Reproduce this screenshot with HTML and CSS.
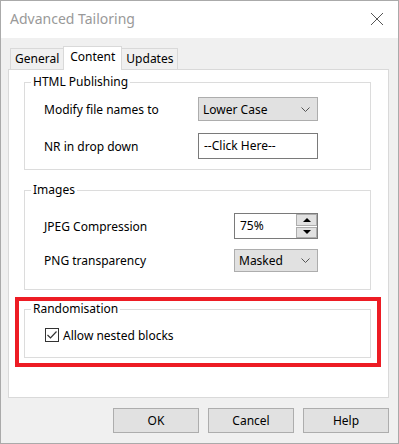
FILE: index.html
```html
<!DOCTYPE html>
<html lang="en">

<head>
    <meta charset="UTF-8">
    <title>Advanced Tailoring</title>
    <link rel="stylesheet" href="styles.css">
</head>

<body>
    <div class="window">
        <div class="titlebar">
            <span class="title">Advanced Tailoring</span>
            <svg class="close" width="14" height="14" viewBox="0 0 14 14">
                <path d="M1 1 L13 13 M13 1 L1 13" stroke="#555" stroke-width="1" fill="none"/>
            </svg>
        </div>
        <div class="client">
            <div class="tabs">
                <div class="tab">General</div>
                <div class="tab active">Content</div>
                <div class="tab">Updates</div>
            </div>
            <div class="panel">
                <!-- HTML 发布 -->
                <fieldset class="group group-html">
                    <legend>HTML Publishing</legend>
                    <div class="row row-first">
                        <label>Modify file names to</label>
                        <div class="combo combo-wide">
                            <span>Lower Case</span>
                            <svg class="chevron" width="9" height="5" viewBox="0 0 9 5"><path d="M0.5 0.5 L4.5 4.5 L8.5 0.5" stroke="#555" fill="none"/></svg>
                        </div>
                    </div>
                    <div class="row row-second">
                        <label>NR in drop down</label>
                        <div class="textbox">--Click Here--</div>
                    </div>
                </fieldset>

                <!-- 图片 -->
                <fieldset class="group group-img">
                    <legend>Images</legend>
                    <div class="row row-first">
                        <label>JPEG Compression</label>
                        <div class="spin">
                            <span class="spin-text">75%</span>
                            <div class="spin-btns">
                                <i class="spin-up"></i>
                                <i class="spin-down"></i>
                            </div>
                        </div>
                    </div>
                    <div class="row row-second">
                        <label>PNG transparency</label>
                        <div class="combo combo-small">
                            <span>Masked</span>
                            <svg class="chevron" width="9" height="5" viewBox="0 0 9 5"><path d="M0.5 0.5 L4.5 4.5 L8.5 0.5" stroke="#555" fill="none"/></svg>
                        </div>
                    </div>
                </fieldset>

                <!-- 红框标注 -->
                <div class="highlight">
                    <fieldset class="group group-rand">
                        <legend>Randomisation</legend>
                        <div class="row row-first">
                            <span class="checkbox">
                                <svg width="12" height="12" viewBox="0 0 12 12"><path d="M1.5 6 L4.5 9 L10.5 2.5" stroke="#333" stroke-width="1.2" fill="none"/></svg>
                            </span>
                            <label>Allow nested blocks</label>
                        </div>
                    </fieldset>
                </div>
            </div>
            <div class="buttons">
                <div class="btn">OK</div>
                <div class="btn">Cancel</div>
                <div class="btn">Help</div>
            </div>
        </div>
    </div>
</body>

</html>
```

FILE: styles.css
```css
* {
    margin: 0;
    padding: 0;
    box-sizing: border-box;
}

body {
    font-family: "Noto Sans", "Liberation Sans", sans-serif;
    font-size: 12px;
    color: #000;
    background: #fff;
}

.window {
    width: 399px;
    height: 444px;
    border: 1px solid #aaa;
    background: #f0f0f0;
    display: flex;
    flex-direction: column;
}

.titlebar {
    height: 37px;
    background: #fff;
    display: flex;
    align-items: center;
    justify-content: space-between;
    padding: 0 14px 2px 9px;
}

.title {
    font-size: 14px;
    color: #999;
}

.client {
    flex: 1;
    padding: 8px 9px 0 7px;
}

.tabs {
    display: flex;
    align-items: flex-end;
    height: 23px;
    padding-left: 2px;
    position: relative;
    z-index: 1;
}

.tab {
    height: 21px;
    border: 1px solid #d9d9d9;
    border-bottom: none;
    padding: 0 4px;
    line-height: 20px;
    margin-right: -1px;
    background: #f0f0f0;
}

.tab.active {
    height: 24px;
    margin-bottom: -1px;
    background: #fff;
    line-height: 20px;
    padding: 0 6px;
}

.panel {
    height: 329px;
    border: 1px solid #d9d9d9;
    background: #fff;
    padding: 4px 17px 0 15px;
}

.group {
    border: 1px solid #dcdcdc;
    padding: 0 0 10px 0;
}

.group legend {
    margin-left: 6px;
    padding: 0 2px;
    line-height: 16px;
}

.row {
    display: flex;
    align-items: center;
    padding-left: 19px;
}

.group-html .row label {
    width: 154px;
}

.group-img .row label {
    width: 190px;
}

.group-html .row-first {
    margin-top: 7px;
}

.group-html .row-second {
    margin-top: 12px;
}

.group-img {
    margin-top: 12px;
    padding-bottom: 17px;
}

.group-img .row-first {
    margin-top: 15px;
}

.group-img .row-second {
    margin-top: 10px;
}

.combo {
    height: 24px;
    background: #e1e1e1;
    border: 1px solid #adadad;
    display: flex;
    align-items: center;
    justify-content: space-between;
    padding: 0 7px 0 4px;
}

.combo-wide {
    width: 120px;
}

.combo-small {
    width: 84px;
    height: 23px;
}

.textbox {
    width: 120px;
    height: 26px;
    border: 1px solid #7a7a7a;
    padding-left: 5px;
    line-height: 24px;
}

.spin {
    width: 84px;
    height: 26px;
    border: 1px solid #7a7a7a;
    display: flex;
    justify-content: space-between;
}

.spin-text {
    padding-left: 5px;
    line-height: 24px;
}

.spin-btns {
    width: 21px;
    display: flex;
    flex-direction: column;
    gap: 1px;
}

.spin-btns i {
    flex: 1;
    background: #e1e1e1;
    border: 1px solid #adadad;
    display: flex;
    align-items: center;
    justify-content: center;
}

.spin-btns i::after {
    content: "";
    border-left: 4px solid transparent;
    border-right: 4px solid transparent;
}

.spin-up::after {
    border-bottom: 4px solid #000;
}

.spin-down::after {
    border-top: 4px solid #000;
}

.highlight {
    margin: 7px -10px 0 -9px;
    border: 4px solid #ed1c24;
    padding: 0 6px 5px 5px;
}

.group-rand {
    padding-bottom: 15px;
}

.group-rand .row-first {
    height: 14px;
    margin-top: 11px;
    padding-left: 20px;
}

.checkbox {
    width: 14px;
    height: 14px;
    border: 1px solid #333;
    display: flex;
    align-items: center;
    justify-content: center;
    margin-right: 4px;
}

.buttons {
    display: flex;
    justify-content: flex-end;
    gap: 9px;
    margin-top: 10px;
}

.btn {
    width: 86px;
    height: 25px;
    background: #e1e1e1;
    border: 1px solid #adadad;
    text-align: center;
    line-height: 23px;
}
```
